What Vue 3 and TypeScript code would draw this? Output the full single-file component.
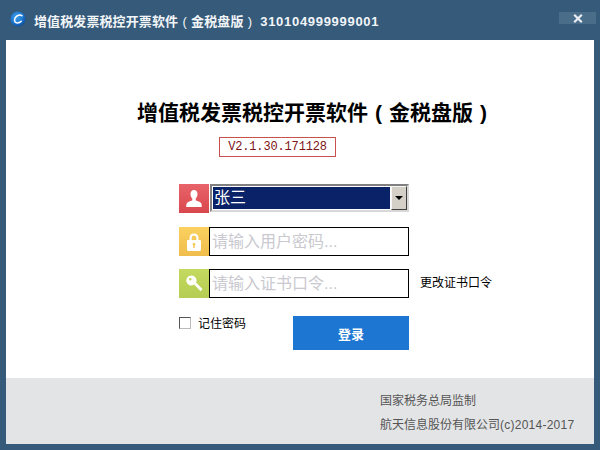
<script setup lang="ts">
import { ref } from 'vue'

const password = ref('')
const certPassword = ref('')
const remember = ref(false)
</script>

<template>
  <div class="window">
    <header class="titlebar">
      <svg class="logo" width="16" height="16" viewBox="0 0 18 18">
        <defs>
          <radialGradient id="logoBg" cx="40%" cy="35%" r="75%">
            <stop offset="0" stop-color="#3f9fe8" />
            <stop offset="0.6" stop-color="#1a74cc" />
            <stop offset="1" stop-color="#0c3f86" />
          </radialGradient>
        </defs>
        <circle cx="9" cy="9" r="8.500" fill="url(#logoBg)" />
        <path d="M13.400 5.300C11.300 3.700 7.800 4.700 6 7.400 4.400 9.900 5 12.700 7.400 13.300 9.200 13.700 11.200 12.900 12.600 11.500" fill="none" stroke="#fff" stroke-width="1.700" stroke-linecap="round" />
      </svg>
      <span class="title-text">增值税发票税控开票软件<span class="paren">(</span>金税盘版<span class="paren">)</span> <span class="tax-no">310104999999001</span></span>
      <button class="close-btn" aria-label="关闭">
        <svg width="10" height="9" viewBox="0 0 10 9">
          <path d="M1.200 .8l7.600 7.400M8.800 .8L1.200 8.200" stroke="#e9eef4" stroke-width="2.200" fill="none" />
        </svg>
      </button>
    </header>

    <main class="panel">
      <section class="content">
        <h1 class="app-name">增值税发票税控开票软件<span class="paren">(</span>金税盘版<span class="paren">)</span></h1>
        <div class="version">V2.1.30.171128</div>

        <div class="form">
          <div class="row row-user">
            <span class="field-icon red">
              <svg width="16" height="18" viewBox="0 0 16 18">
                <path d="M8 0c2.300 0 3.500 1.700 3.500 4 0 1.900-.8 3.600-1.800 4.500v1.700c1.800.9 4.600 1.500 5.500 3.100.5 1 .6 2.300.6 3.700H.2c0-1.400.1-2.700.6-3.700.9-1.600 3.700-2.200 5.500-3.100V8.500C5.300 7.600 4.500 5.900 4.500 4 4.500 1.700 5.700 0 8 0Z" fill="#fff" />
              </svg>
            </span>
            <div class="select-box">
              <div class="select-value">张三</div>
              <div class="select-arrow"><i></i></div>
            </div>
          </div>

          <div class="row row-pass">
            <span class="field-icon yellow">
              <svg width="14" height="18" viewBox="0 0 14 18">
                <path fill-rule="evenodd" d="M2.500 7V4.800C2.500 2 4.500 .5 7 .5s4.500 1.500 4.500 4.300V7h1.300c.7 0 1.200.5 1.200 1.200v8.600c0 .7-.5 1.200-1.200 1.200H1.200C.5 18 0 17.500 0 16.800V8.200C0 7.500.5 7 1.200 7h1.300Zm2.200 0h4.600V4.800C9.300 3.300 8.300 2.500 7 2.500s-2.300.8-2.300 2.300V7ZM7 10a1.400 1.400 0 0 0-.7 2.600V15h1.400v-2.400A1.400 1.400 0 0 0 7 10Z" fill="#fff" />
              </svg>
            </span>
            <input v-model="password" class="text-input" type="password" placeholder="请输入用户密码..." />
          </div>

          <div class="row row-cert">
            <span class="field-icon green">
              <svg width="17" height="17" viewBox="0 0 17 17">
                <path fill-rule="evenodd" d="M5.500 .5a5 5 0 0 1 4.600 7l6.400 6.500-1.900 2.200-6.500-6.600A5 5 0 1 1 5.500 .5ZM4.300 3a1.300 1.300 0 1 0 0 2.600 1.300 1.300 0 0 0 0-2.600Z" fill="#fff" />
              </svg>
            </span>
            <input v-model="certPassword" class="text-input" type="password" placeholder="请输入证书口令..." />
            <a class="change-link">更改证书口令</a>
          </div>

          <div class="row row-login">
            <label class="remember">
              <input v-model="remember" class="check" type="checkbox" />
              <span>记住密码</span>
            </label>
            <button class="login-btn">登录</button>
          </div>
        </div>
      </section>

      <footer class="footer">
        <p>国家税务总局监制</p>
        <p>航天信息股份有限公司<span class="copyright">(c)2014-2017</span></p>
      </footer>
    </main>
  </div>
</template>

<style>
html, body {
  margin: 0;
  background: #355a7a;
}
</style>

<style scoped>
.window {
  width: 600px;
  height: 450px;
  box-sizing: border-box;
  padding: 0 6px 6px;
  display: flex;
  flex-direction: column;
  background: #355a7a;
  font-family: "Liberation Sans", "Noto Sans CJK SC", sans-serif;
}

.titlebar {
  height: 40px;
  flex: none;
  display: flex;
  align-items: center;
  color: #f2f5f8;
  font-size: 13px;
  font-weight: 700;
}

.logo {
  margin: -2px 0 0 4px;
  flex: none;
}

.title-text {
  margin-left: 8px;
  letter-spacing: 0.1px;
}

/* brackets sit in the middle of a full-width cell */
.paren {
  display: inline-block;
  width: 1em;
  text-align: center;
  font-weight: 400;
}

.tax-no {
  letter-spacing: 0.7px;
}

.close-btn {
  margin-left: auto;
  margin-right: -2px;
  margin-top: -4px;
  width: 37px;
  height: 12px;
  padding: 0;
  border: none;
  background: #4a6d8a;
  display: flex;
  align-items: center;
  justify-content: center;
}

.panel {
  flex: 1;
  display: flex;
  flex-direction: column;
  background: #fff;
}

.content {
  flex: 1;
}

.app-name {
  margin: 60px 0 0 131px;
  height: 26px;
  font-size: 21px;
  line-height: 26px;
  font-weight: 700;
  color: #000;
  white-space: nowrap;
}

.app-name .paren {
  font-weight: 700;
}

.version {
  margin: 11px 0 0 213px;
  width: 117px;
  height: 20px;
  box-sizing: border-box;
  border: 1px solid #c8504f;
  text-align: center;
  font-family: "Liberation Mono", monospace;
  font-size: 12px;
  letter-spacing: -0.15px;
  line-height: 18px;
  color: #7c1414;
}

.form {
  margin: 27px 0 0 173px;
}

.row {
  display: flex;
  align-items: stretch;
  height: 29px;
}

.row-pass {
  margin-top: 14px;
}

.row-cert {
  margin-top: 13px;
}

.row-login {
  margin-top: 18px;
  height: 34px;
}

.field-icon {
  width: 30px;
  flex: none;
  display: flex;
  align-items: center;
  justify-content: center;
}

.red {
  background: linear-gradient(#e8646a, #d9474d);
}

.yellow {
  background: linear-gradient(#fbd15f, #efbd4c);
}

.green {
  background: linear-gradient(#c3d95f, #b5cd52);
}

.select-box {
  margin-left: 1px;
  width: 199px;
  height: 28px;
  box-sizing: border-box;
  border: 2px solid;
  border-color: #808080 #d8d8d8 #d8d8d8 #808080;
  display: flex;
  background: #fff;
}

.select-value {
  flex: 1;
  margin: 1px;
  background: #0a2368;
  color: #fff;
  font-size: 16px;
  line-height: 22px;
  padding-left: 1px;
}

.select-arrow {
  width: 16px;
  box-sizing: border-box;
  background: #d4d0c8;
  border: 1px solid;
  border-color: #f5f5f5 #404040 #404040 #f5f5f5;
  display: flex;
  align-items: center;
  justify-content: center;
}

.select-arrow i {
  width: 0;
  height: 0;
  border-left: 4px solid transparent;
  border-right: 4px solid transparent;
  border-top: 4px solid #000;
}

.text-input {
  width: 200px;
  height: 29px;
  box-sizing: border-box;
  border: 1px solid #000;
  outline: none;
  padding: 0 2px;
  font-family: inherit;
  font-size: 16px;
  background: #fff;
}

.text-input::placeholder {
  color: #c9c9cf;
  opacity: 1;
}

.change-link {
  margin-left: 11px;
  font-size: 12px;
  line-height: 29px;
  color: #000;
}

.remember {
  display: flex;
  align-items: flex-start;
  gap: 7px;
  width: 114px;
  font-size: 12px;
  line-height: 16px;
  color: #000;
}

.check {
  appearance: none;
  margin: 1px 0 0;
  width: 12px;
  height: 12px;
  box-sizing: border-box;
  border: 1px solid;
  border-color: #555 #bbb #bbb #555;
  background: #fff;
}

.login-btn {
  width: 116px;
  height: 34px;
  padding: 0;
  border: none;
  background: #1c76d2;
  color: #fff;
  font-family: inherit;
  font-size: 13px;
  font-weight: 700;
}

.footer {
  height: 66px;
  flex: none;
  box-sizing: border-box;
  padding: 11px 0 0 374px;
  background: #e3e4e6;
  color: #555;
  font-size: 12px;
  line-height: 24px;
}

.footer p {
  margin: 0;
  white-space: nowrap;
}

.copyright {
  letter-spacing: 0.25px;
}
</style>
